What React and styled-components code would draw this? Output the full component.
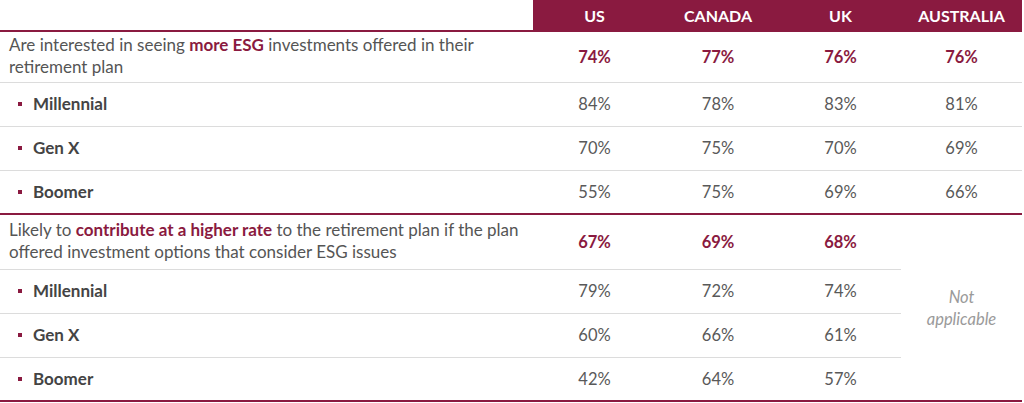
import React from "react";
import styled, { createGlobalStyle } from "styled-components";

const MAROON = "#8a1a40";

const Global = createGlobalStyle`
  body {
    margin: 0;
    background: #fff;
    font-family: Lato, "Open Sans", "Liberation Sans", sans-serif;
  }
`;

const Table = styled.table`
  width: 1022px;
  border-collapse: collapse;
  table-layout: fixed;
  border-bottom: 2px solid ${MAROON};
`;

const HeadCell = styled.th`
  height: 30px;
  padding: 0;
  background: ${(p) => (p.$blank ? "#fff" : MAROON)};
  color: #fff;
  font-size: 16px;
  font-weight: 700;
  text-align: center;
  border-bottom: 2px solid ${MAROON};
`;

const Row = styled.tr`
  border-top: ${(p) => (p.$question ? `2px solid ${MAROON}` : "1px solid #dcdcdc")};
`;

const Label = styled.td`
  height: ${(p) => p.$h}px;
  box-sizing: border-box;
  padding: ${(p) => (p.$question ? "0 4px 1px 9px" : "0 0 0 18px")};
  font-size: 17px;
  line-height: 22px;
  color: ${(p) => (p.$question ? "#555" : "#444")};
  font-weight: ${(p) => (p.$question ? 400 : 700)};
  vertical-align: middle;
`;

const Bullet = styled.span`
  display: inline-block;
  width: 4px;
  height: 4px;
  background: ${MAROON};
  margin-right: 11px;
  vertical-align: 4px;
`;

const Em = styled.b`
  color: ${MAROON};
  font-weight: 700;
`;

const Value = styled.td`
  padding: 0;
  text-align: center;
  font-size: 16.5px;
  color: ${(p) => (p.$strong ? MAROON : "#595959")};
  font-weight: ${(p) => (p.$strong ? 700 : 400)};
  vertical-align: middle;
`;

const NotApplicable = styled.td`
  text-align: center;
  font-style: italic;
  color: #9a9a9a;
  font-size: 16.5px;
  line-height: 22px;
  vertical-align: middle;
  border-top: 2px solid ${MAROON};
  background: #fff;
`;

const sections = [
  {
    question: (
      <>
        Are interested in seeing <Em>more ESG</Em> investments offered in their
        retirement plan
      </>
    ),
    height: 51,
    total: ["74%", "77%", "76%", "76%"],
    groups: [
      ["Millennial", ["84%", "78%", "83%", "81%"]],
      ["Gen X", ["70%", "75%", "70%", "69%"]],
      ["Boomer", ["55%", "75%", "69%", "66%"]],
    ],
  },
  {
    question: (
      <>
        Likely to <Em>contribute at a higher rate</Em> to the retirement plan if
        the plan offered investment options that consider ESG issues
      </>
    ),
    height: 55,
    total: ["67%", "69%", "68%"],
    groups: [
      ["Millennial", ["79%", "72%", "74%"]],
      ["Gen X", ["60%", "66%", "61%"]],
      ["Boomer", ["42%", "64%", "57%"]],
    ],
  },
];

export default function App() {
  return (
    <>
      <Global />
      <Table>
        <colgroup>
          <col style={{ width: 533 }} />
          <col style={{ width: 123 }} />
          <col style={{ width: 124 }} />
          <col style={{ width: 121 }} />
          <col style={{ width: 121 }} />
        </colgroup>
        <thead>
          <tr>
            <HeadCell $blank />
            <HeadCell>US</HeadCell>
            <HeadCell>CANADA</HeadCell>
            <HeadCell>UK</HeadCell>
            <HeadCell>AUSTRALIA</HeadCell>
          </tr>
        </thead>
        <tbody>
          {sections.map((s, si) => (
            <React.Fragment key={si}>
              <Row $question>
                <Label $question $h={s.height}>
                  {s.question}
                </Label>
                {s.total.map((v, i) => (
                  <Value key={i} $strong>
                    {v}
                  </Value>
                ))}
                {s.total.length === 3 && (
                  <NotApplicable rowSpan={4}>
                    Not
                    <br />
                    applicable
                  </NotApplicable>
                )}
              </Row>
              {s.groups.map(([name, vals]) => (
                <Row key={name}>
                  <Label $h={44}>
                    <Bullet />
                    {name}
                  </Label>
                  {vals.map((v, i) => (
                    <Value key={i}>{v}</Value>
                  ))}
                </Row>
              ))}
            </React.Fragment>
          ))}
        </tbody>
      </Table>
    </>
  );
}
